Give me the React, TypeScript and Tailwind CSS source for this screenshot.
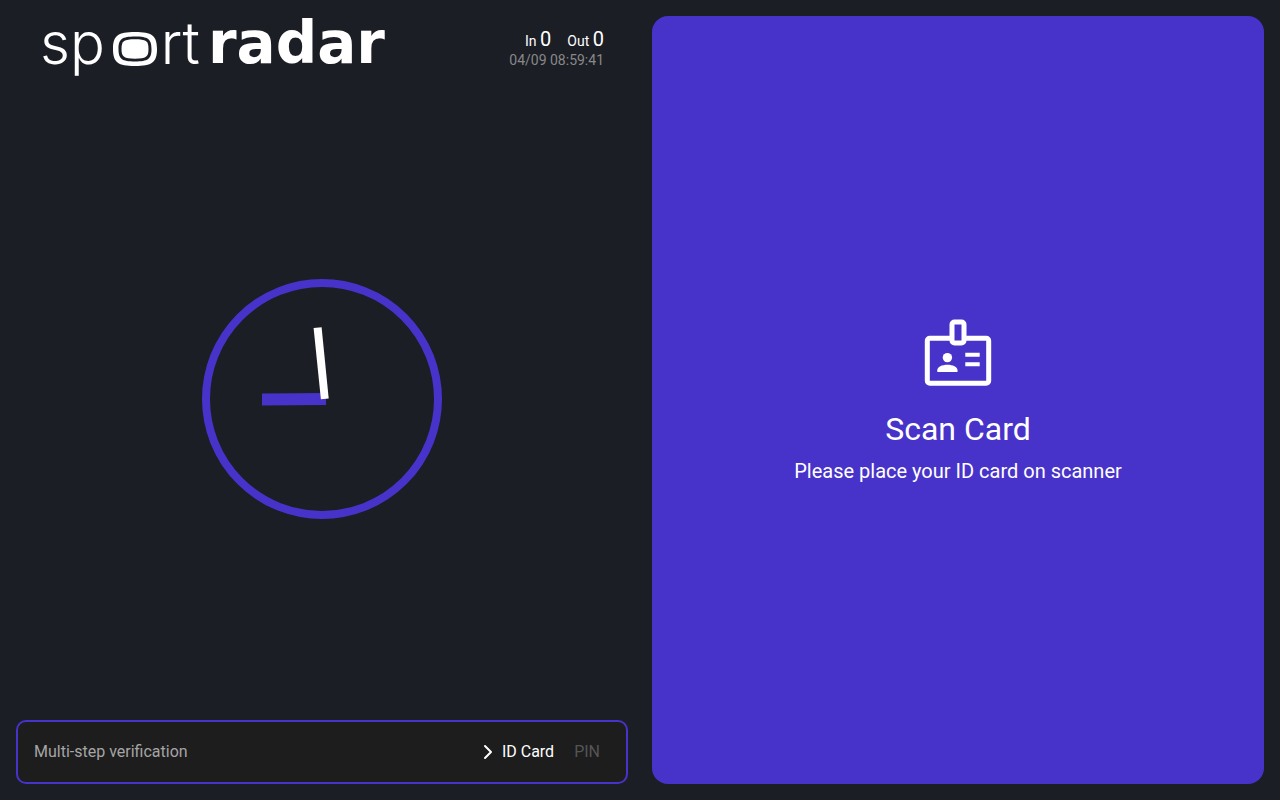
import { ChevronRight } from 'lucide-react'

const counters = [
  { label: 'In', value: 0 },
  { label: 'Out', value: 0 },
]

const steps = [
  { label: 'ID Card', active: true },
  { label: 'PIN', active: false },
]

function Logo() {
  return (
    <h1 className="flex items-start text-[58px] leading-[54px] text-white">
      <span className="font-[Inter,sans-serif] font-light">sp</span>
      <svg className="mt-4 mr-1 ml-2 h-[34px] w-11 shrink-0" viewBox="0 0 44 34" role="img" aria-label="o">
        <path
          fillRule="evenodd"
          d="M22 0C39 0 44 3.500 44 17S39 34 22 34S0 30.500 0 17S5 0 22 0ZM22 4.500C9 4.500 5.500 7 5.500 17S9 29.500 22 29.500S38.500 27 38.500 17S35 4.500 22 4.500Z"
          fill="currentColor"
        />
        <path
          d="M22 7.300C33 7.300 35.500 9 35.500 17S33 26.700 22 26.700S8.500 25 8.500 17S11 7.300 22 7.300Z"
          fill="currentColor"
        />
      </svg>
      <span className="font-[Inter,sans-serif] font-light">rt</span>
      <span className="ml-2 font-['DejaVu_Sans',sans-serif] font-bold">radar</span>
    </h1>
  )
}

function Clock() {
  return (
    <svg className="size-60" viewBox="0 0 240 240" role="img" aria-label="Clock">
      <circle cx="120" cy="120" r="116" fill="none" stroke="#4733c9" strokeWidth="8" />
      <path d="M60 114.400L124 114V126L60 126.500Z" fill="#4733c9" />
      <path d="M111.600 49L119.600 48.200L126.700 119.400L118.900 120.300Z" fill="#fff" />
    </svg>
  )
}

function BadgeIcon() {
  return (
    <svg className="size-20" viewBox="0 0 80 80" fill="none" aria-hidden="true">
      <rect x="9.300" y="26.200" width="61.400" height="45" rx="2.500" stroke="#fff" strokeWidth="5" />
      <rect x="34" y="10" width="12" height="21" rx="2.500" fill="#4733c9" stroke="#fff" strokeWidth="5" />
      <circle cx="29.400" cy="45.600" r="4.700" fill="#fff" />
      <path d="M19.300 60V58.200C19.300 55 24 52.800 29.400 52.800S39.500 55 39.500 58.200V60Z" fill="#fff" />
      <path d="M47.300 42.800H61.700M47.300 52.300H61.700" stroke="#fff" strokeWidth="4" />
    </svg>
  )
}

export default function App() {
  return (
    <main className="grid min-h-screen grid-cols-2 gap-6 bg-[#1b1e25] p-4 font-[Roboto,sans-serif] text-white">
      <section className="flex flex-col">
        <header className="flex items-start justify-between px-6 pb-2">
          <Logo />
          <div className="flex flex-col items-end pt-[10px] text-sm">
            <dl className="flex gap-4">
              {counters.map((counter) => (
                <div key={counter.label} className="leading-[26px]">
                  <dt className="inline">{counter.label}</dt>{' '}
                  <dd className="inline text-xl leading-[26px]">{counter.value}</dd>
                </div>
              ))}
            </dl>
            <time className="leading-3 text-[#888888]">04/09 08:59:41</time>
          </div>
        </header>

        <div className="flex flex-1 items-center justify-center">
          <Clock />
        </div>

        <footer className="flex h-16 items-center justify-between rounded-[10px] border-2 border-[#4733c9] bg-[#1d1d1e] pr-[26px] pl-4">
          <span className="text-[#a5a5a5]">Multi-step verification</span>
          <ol className="flex items-center gap-5">
            {steps.map((step) => (
              <li
                key={step.label}
                className={step.active ? 'flex items-center gap-0.5' : 'text-[#555555]'}
              >
                {step.active && <ChevronRight className="size-6" aria-hidden="true" />}
                {step.label}
              </li>
            ))}
          </ol>
        </footer>
      </section>

      <section className="flex flex-col items-center justify-center rounded-2xl bg-[#4733c9] text-center">
        <BadgeIcon />
        <h2 className="mt-4 text-[32px] leading-[42px]">Scan Card</h2>
        <p className="mt-1 text-xl leading-[34px]">Please place your ID card on scanner</p>
      </section>
    </main>
  )
}
